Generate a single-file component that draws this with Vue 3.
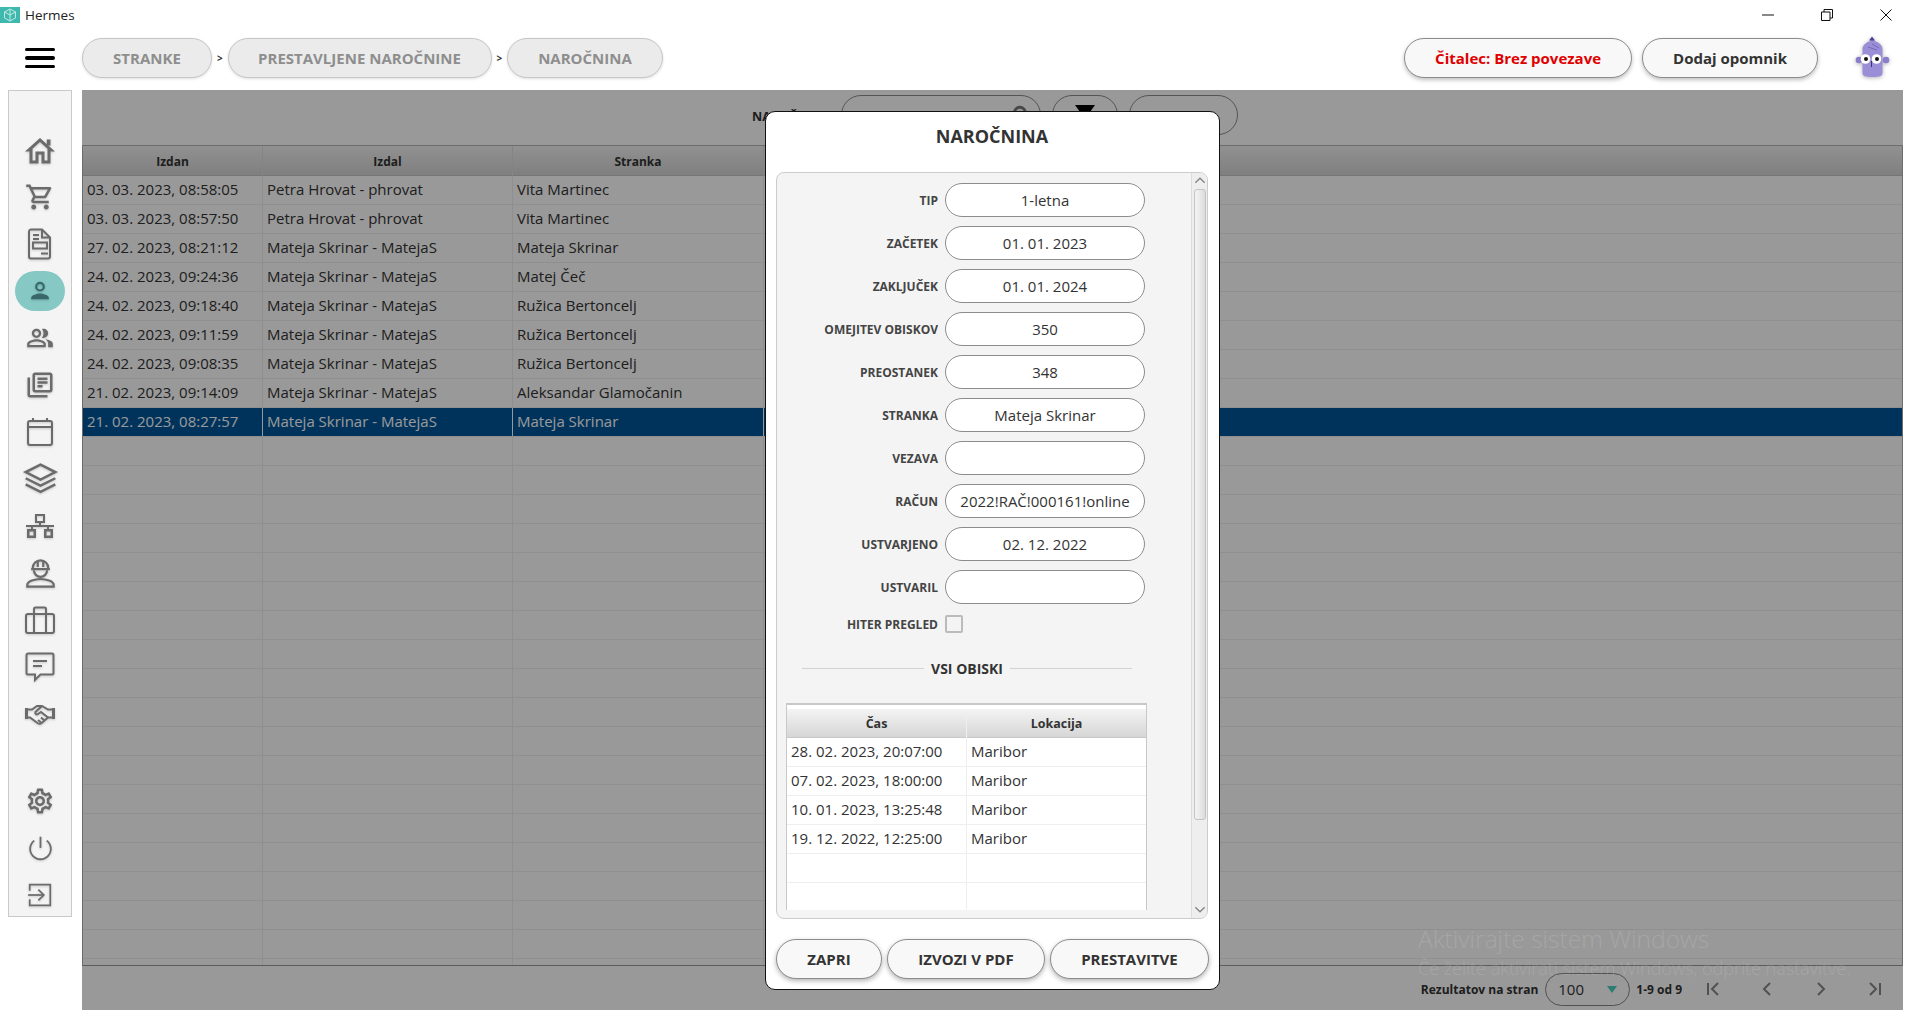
<script setup>
const crumbs = [
  { label: 'STRANKE', width: 130 },
  { label: 'PRESTAVLJENE NAROČNINE', width: 264 },
  { label: 'NAROČNINA', width: 156 }
]

const navTop = [
  { size: 36, vb: '0 -1 24 24', fill: ['M12 5.69l5 4.5V18h-2v-6H9v6H7v-7.81l5-4.5M12 3L2 12h3v8h6v-6h2v6h6v-8h3L12 3z', 'M16.500 4h2.500v4h-2.500z'] },
  { vb: '0 0 24 24', fill: ['M15.55 13c.75 0 1.41-.41 1.75-1.03l3.58-6.49c.37-.66-.11-1.48-.87-1.48H5.21l-.94-2H1v2h2l3.6 7.59-1.35 2.44C4.52 15.37 5.48 17 7 17h12v-2H7l1.1-2h7.45zM6.16 6h12.15l-2.76 5H8.53L6.16 6zM7 18c-1.1 0-1.99.9-1.99 2S5.9 22 7 22s2-.9 2-2-.9-2-2-2zm10 0c-1.1 0-1.99.9-1.99 2s.89 2 1.99 2 2-.9 2-2-.9-2-2-2z'] },
  { size: 34, vb: '0 0 28 34', line: ['M5 2.500h11l8 8v19a2 2 0 0 1-2 2H5a2 2 0 0 1-2-2v-25a2 2 0 0 1 2-2z', 'M16 2.500v8h8', 'M7 8h6M7 12h6', 'M7 15.500h14v6H7z', 'M15 26.500h7'] },
  { size: 26, vb: '0 0 24 24', active: true, line: ['M12 4.500a3.500 3.500 0 1 1 0 7a3.500 3.500 0 0 1 0-7z'], fill: ['M3.800 19.500v-.8c0-2.900 5.400-4.300 8.200-4.300s8.200 1.400 8.200 4.300v.8z'] },
  { size: 28, vb: '0 0 24 24', fill: ['M16.67 13.13C18.04 14.06 19 15.32 19 17v3h4v-3c0-2.180-3.570-3.470-6.330-3.870z', 'M15 12c2.210 0 4-1.790 4-4s-1.790-4-4-4c-.47 0-.91.1-1.330.24C14.500 5.270 15 6.580 15 8s-.5 2.730-1.330 3.760c.42.14.86.24 1.330.24z', 'M9 12c2.210 0 4-1.790 4-4s-1.790-4-4-4-4 1.790-4 4 1.790 4 4 4zm0-6c1.100 0 2 .9 2 2s-.9 2-2 2-2-.9-2-2 .9-2 2-2z', 'M9 13c-2.670 0-8 1.340-8 4v3h16v-3c0-2.660-5.330-4-8-4zm6 5H3v-.99C3.200 16.290 6.300 15 9 15s5.800 1.290 6 2v1z'] },
  { vb: '0 0 24 24', fill: ['M4 6H2v14c0 1.100.9 2 2 2h14v-2H4V6zm16-4H8c-1.100 0-2 .9-2 2v12c0 1.100.9 2 2 2h12c1.100 0 2-.9 2-2V4c0-1.100-.9-2-2-2zm0 14H8V4h12v12zM10 9h8v2h-8zm0 3h4v2h-4zm0-6h8v2h-8z'] },
  { vb: '0 0 28 30', line: ['M4 4h20a2 2 0 0 1 2 2v20a2 2 0 0 1-2 2H4a2 2 0 0 1-2-2V6a2 2 0 0 1 2-2z', 'M2 10h24', 'M7 1v4M21 1v4'] },
  { size: 37, vb: '0 0 30 30', line: ['M15 3l12 6-12 6-12-6z', 'M3 14l12 6 12-6', 'M3 19l12 6 12-6'] },
  { vb: '0 0 30 26', line: ['M11 2h8v7h-8z', 'M15 9v4M1 13h28M7 13v4M23 13v4'], fill: ['M2 16h9v9H2zM4.500 18.500v4h4v-4zM19 16h9v9h-9zM21.500 18.500v4h4v-4z'] },
  { size: 33, vb: '0 1 28 30', line: ['M7 11a7 7 0 0 1 14 0', 'M5.500 12h17', 'M11.500 4.500V10M16.500 4.500V10', 'M8 13a6 6 0 0 0 12 0', 'M2 28v-1.500c0-3.500 7-5.500 12-5.500s12 2 12 5.500V28z'] },
  { vb: '0 0 30 28', line: ['M3 8h24a2 2 0 0 1 2 2v15a2 2 0 0 1-2 2H3a2 2 0 0 1-2-2V10a2 2 0 0 1 2-2z', 'M9 8V3a1.500 1.500 0 0 1 1.500-1.500h9A1.500 1.500 0 0 1 21 3v5', 'M9 8v19M21 8v19'] },
  { vb: '0 0 30 30', line: ['M3 1.500h24A1.500 1.500 0 0 1 28.500 3v18a1.500 1.500 0 0 1-1.500 1.500H15.500L10 28v-5.500H3A1.500 1.500 0 0 1 1.500 21V3A1.500 1.500 0 0 1 3 1.500z', 'M8 9h14M8 14h9'] },
  { vb: '0 0 30 22', fill: ['M0 5h3v11H0zM27 5h3v11h-3z'], line: ['M3 6.500h4L12 3h5l6 3.500h4', 'M3 14.500h2l7.500 5.500c1.500 1 3 1 4.500-.2l6-5.300h4', 'M17 3l-6.500 6c-1 1.500 1 3 2.500 2l3-2 7 5.500', 'M13 17l3 2.500M16 14.500l3.500 3'] }
]

const navBottom = [
  { vb: '0 0 24 24', fill: ['M19.43 12.98c.04-.32.07-.64.07-.98 0-.34-.03-.66-.07-.98l2.110-1.650c.19-.15.24-.42.12-.64l-2-3.460c-.09-.16-.26-.25-.44-.25-.06 0-.12.01-.17.03l-2.490 1c-.52-.4-1.080-.73-1.690-.98l-.38-2.650C14.460 2.180 14.250 2 14 2h-4c-.25 0-.46.18-.49.42l-.38 2.650c-.61.25-1.170.59-1.690.98l-2.490-1c-.06-.02-.12-.03-.18-.03-.17 0-.34.09-.43.25l-2 3.460c-.13.22-.07.49.12.64l2.110 1.650c-.04.32-.07.65-.07.98 0 .33.03.66.07.98l-2.110 1.650c-.19.15-.24.42-.12.64l2 3.460c.09.16.26.25.44.25.06 0 .12-.01.17-.03l2.490-1c.52.4 1.080.73 1.690.98l.38 2.650c.03.24.24.42.49.42h4c.25 0 .46-.18.49-.42l.38-2.650c.61-.25 1.170-.59 1.690-.98l2.490 1c.06.02.12.03.18.03.17 0 .34-.09.43-.25l2-3.460c.12-.22.07-.49-.12-.64l-2.110-1.650zm-1.980-1.710c.04.31.05.52.05.73 0 .21-.02.43-.05.73l-.14 1.130.89.7 1.080.84-.7 1.210-1.270-.51-1.040-.42-.9.68c-.43.32-.84.56-1.250.73l-1.060.43-.16 1.130-.2 1.350h-1.400l-.19-1.350-.16-1.130-1.060-.43c-.43-.18-.83-.41-1.230-.71l-.91-.7-1.060.43-1.270.51-.7-1.210 1.080-.84.89-.7-.14-1.130c-.03-.31-.05-.54-.05-.74s.02-.43.05-.73l.14-1.130-.89-.7-1.080-.84.7-1.210 1.270.51 1.040.42.9-.68c.43-.32.84-.56 1.250-.73l1.060-.43.16-1.130.2-1.350h1.390l.19 1.350.16 1.130 1.060.43c.43.18.83.41 1.230.71l.91.7 1.060-.43 1.270-.51.7 1.210-1.070.85-.89.7.14 1.130zM12 8c-2.210 0-4 1.790-4 4s1.790 4 4 4 4-1.790 4-4-1.790-4-4-4zm0 6c-1.100 0-2-.9-2-2s.9-2 2-2 2 .9 2 2-.9 2-2 2z'] },
  { size: 27, thin: true, vb: '0 1 24 24', line: ['M12 2.500v10', 'M6.500 6a9.200 9.200 0 1 0 11 0'] },
  { size: 26, thin: true, vb: '0 0 24 24', line: ['M2.500 8V2.500h19v19h-19V16', 'M1 12h14', 'M10.500 7l5 5-5 5'] }
]

const rows = [
  ['03. 03. 2023, 08:58:05', 'Petra Hrovat - phrovat', 'Vita Martinec'],
  ['03. 03. 2023, 08:57:50', 'Petra Hrovat - phrovat', 'Vita Martinec'],
  ['27. 02. 2023, 08:21:12', 'Mateja Skrinar - MatejaS', 'Mateja Skrinar'],
  ['24. 02. 2023, 09:24:36', 'Mateja Skrinar - MatejaS', 'Matej Čeč'],
  ['24. 02. 2023, 09:18:40', 'Mateja Skrinar - MatejaS', 'Ružica Bertoncelj'],
  ['24. 02. 2023, 09:11:59', 'Mateja Skrinar - MatejaS', 'Ružica Bertoncelj'],
  ['24. 02. 2023, 09:08:35', 'Mateja Skrinar - MatejaS', 'Ružica Bertoncelj'],
  ['21. 02. 2023, 09:14:09', 'Mateja Skrinar - MatejaS', 'Aleksandar Glamočanin'],
  ['21. 02. 2023, 08:27:57', 'Mateja Skrinar - MatejaS', 'Mateja Skrinar']
]
const selectedRow = 8
const emptyRows = 20

const fields = [
  ['TIP', '1-letna'],
  ['ZAČETEK', '01. 01. 2023'],
  ['ZAKLJUČEK', '01. 01. 2024'],
  ['OMEJITEV OBISKOV', '350'],
  ['PREOSTANEK', '348'],
  ['STRANKA', 'Mateja Skrinar'],
  ['VEZAVA', ''],
  ['RAČUN', '2022!RAČ!000161!online'],
  ['USTVARJENO', '02. 12. 2022'],
  ['USTVARIL', '']
]

const visits = [
  ['28. 02. 2023, 20:07:00', 'Maribor'],
  ['07. 02. 2023, 18:00:00', 'Maribor'],
  ['10. 01. 2023, 13:25:48', 'Maribor'],
  ['19. 12. 2022, 12:25:00', 'Maribor'],
  ['', ''],
  ['', '']
]
</script>

<template>
  <div class="app">
    <header class="titlebar">
      <svg class="logo" viewBox="0 0 20 16">
        <rect width="20" height="16" fill="#3fb8ae" />
        <path d="M10 2l5.500 3v6L10 14l-5.500-3V5zM10 2v12M4.500 5L10 8l5.500-3" fill="none" stroke="#cfeeea" stroke-width=".9" />
      </svg>
      <span class="app-name">Hermes</span>
      <div class="win-buttons">
        <svg viewBox="0 0 12 12"><path d="M0 6h12" /></svg>
        <svg viewBox="0 0 12 12"><path d="M.5 3h8.500v8.500H.5zM3 3V.5h8.500V9H9" /></svg>
        <svg viewBox="0 0 12 12"><path d="M.5.5l11 11M11.500.5l-11 11" /></svg>
      </div>
    </header>

    <div class="topbar">
      <button class="hamburger"><i></i><i></i><i></i></button>
      <template v-for="(crumb, i) in crumbs" :key="crumb.label">
        <span v-if="i" class="crumb-sep">&gt;</span>
        <span class="crumb" :style="{ width: crumb.width + 'px' }">{{ crumb.label }}</span>
      </template>
      <span class="pill reader">Čitalec: Brez povezave</span>
      <span class="pill">Dodaj opomnik</span>
      <svg class="mascot" viewBox="0 0 50 50">
        <circle cx="11" cy="27" r="3.300" fill="#8b7dc9" />
        <circle cx="38" cy="27" r="3.300" fill="#8b7dc9" />
        <path d="M24 5c1 0 2 1 2.500 3c4 1 8 4 8 8v24c0 3-3 4-10 4s-10-1-10-4V16c0-4 4-7 8-8c.5-2 .5-3 1.500-3z" fill="#9a8ed6" />
        <path d="M24 3.500l3 4h-6z" fill="#4d3f96" />
        <path d="M20 14l9 3M24 11l7 4" stroke="#7668b8" fill="none" />
        <circle cx="17.500" cy="26" r="4.800" fill="#fff" />
        <circle cx="28.500" cy="26" r="4.800" fill="#fff" />
        <circle cx="18" cy="26" r="2" fill="#111" />
        <circle cx="29" cy="26" r="2" fill="#111" />
        <path d="M23.500 28v6" stroke="#3c3470" stroke-width="1" />
      </svg>
    </div>

    <div class="main">
      <nav class="sidebar">
        <div class="nav-group">
          <span v-for="(item, i) in navTop" :key="i" class="nav-item" :class="{ active: item.active }">
            <svg :viewBox="item.vb" :width="item.size || 30" :height="item.size || 30">
              <path v-for="d in item.fill" :key="d" :d="d" class="ico-fill" />
              <path v-for="d in item.line" :key="d" :d="d" class="ico-line" />
            </svg>
          </span>
        </div>
        <div class="nav-group">
          <span v-for="(item, i) in navBottom" :key="i" class="nav-item" :class="{ thin: item.thin }">
            <svg :viewBox="item.vb" :width="item.size || 30" :height="item.size || 30">
              <path v-for="d in item.fill" :key="d" :d="d" class="ico-fill" />
              <path v-for="d in item.line" :key="d" :d="d" class="ico-line" />
            </svg>
          </span>
        </div>
      </nav>

      <section class="content">
        <div class="toolbar">
          <span class="filter-label">NAROČNINA</span>
          <span class="tool search">
            <svg viewBox="0 0 16 16"><circle cx="7" cy="7" r="5" /></svg>
          </span>
          <span class="tool funnel"><i></i></span>
          <span class="tool wide"></span>
        </div>

        <div class="table">
          <div class="t-row t-head">
            <div>Izdan</div><div>Izdal</div><div>Stranka</div><div></div>
          </div>
          <div v-for="(row, i) in rows" :key="i" class="t-row" :class="{ selected: i === selectedRow }">
            <div v-for="cell in row" :key="cell">{{ cell }}</div>
            <div></div>
          </div>
          <div v-for="n in emptyRows" :key="'e' + n" class="t-row">
            <div></div><div></div><div></div><div></div>
          </div>
        </div>

        <footer class="pager">
          <span class="pager-label">Rezultatov na stran</span>
          <span class="page-size">100<i></i></span>
          <span class="pager-label range">1-9 od 9</span>
          <svg class="pager-ico" viewBox="0 0 16 16"><path d="M3 2v12M13 2L7 8l6 6" /></svg>
          <svg class="pager-ico" viewBox="0 0 16 16"><path d="M11 2L5 8l6 6" /></svg>
          <svg class="pager-ico" viewBox="0 0 16 16"><path d="M5 2l6 6-6 6" /></svg>
          <svg class="pager-ico" viewBox="0 0 16 16"><path d="M13 2v12M3 2l6 6-6 6" /></svg>
        </footer>

        <div class="overlay">
          <div class="modal">
            <h2 class="modal-title">NAROČNINA</h2>
            <div class="panel">
              <div class="panel-body">
                <div v-for="f in fields" :key="f[0]" class="field">
                  <label>{{ f[0] }}</label>
                  <span class="field-value">{{ f[1] }}</span>
                </div>
                <div class="field check-row">
                  <label>HITER PREGLED</label>
                  <span class="check"></span>
                </div>
                <div class="divider"><span>VSI OBISKI</span></div>
                <div class="visits">
                  <div class="v-row v-head"><div>Čas</div><div>Lokacija</div></div>
                  <div v-for="(v, i) in visits" :key="i" class="v-row">
                    <div>{{ v[0] }}</div><div>{{ v[1] }}</div>
                  </div>
                </div>
              </div>
              <div class="scrollbar">
                <svg viewBox="0 0 10 6"><path d="M1 5l4-4 4 4" /></svg>
                <div class="thumb"></div>
                <svg viewBox="0 0 10 6"><path d="M1 1l4 4 4-4" /></svg>
              </div>
            </div>
            <div class="modal-actions">
              <button>ZAPRI</button>
              <button>IZVOZI V PDF</button>
              <button>PRESTAVITVE</button>
            </div>
          </div>
        </div>
      </section>
    </div>

    <div class="watermark">
      <div class="wm-big">Aktivirajte sistem Windows</div>
      <div class="wm-small">Če želite aktivirati sistem Windows, odprite nastavitve.</div>
    </div>
  </div>
</template>

<style>
html, body { margin: 0; background: #fff; overflow: hidden; }
</style>

<style scoped>
.app {
  position: relative;
  width: 1917px;
  height: 1024px;
  background: #fff;
  font-family: "Open Sans", "Liberation Sans", sans-serif;
  color: #333;
  overflow: hidden;
}

.titlebar {
  display: flex;
  align-items: center;
  height: 30px;
}
.logo { width: 20px; height: 16px; }
.app-name { margin-left: 5px; font-size: 13.500px; color: #222; }
.win-buttons {
  margin-left: auto;
  display: flex;
  gap: 47px;
  padding-right: 25px;
}
.win-buttons svg { width: 12px; height: 12px; }
.win-buttons path { fill: none; stroke: #111; stroke-width: 1; }

.topbar {
  display: flex;
  align-items: center;
  height: 60px;
  padding: 0 26px 4px 0;
  box-sizing: border-box;
}
.hamburger {
  display: flex;
  flex-direction: column;
  gap: 5px;
  width: 30px;
  margin: 0 27px 0 25px;
  padding: 0;
  border: 0;
  background: none;
}
.hamburger i { height: 3.500px; border-radius: 2px; background: #000; }
.crumb {
  display: flex;
  align-items: center;
  justify-content: center;
  height: 40px;
  box-sizing: border-box;
  border: 1px solid #c6c6c6;
  border-radius: 20px;
  background: #ebebeb;
  color: #8e8e8e;
  font-size: 15px;
  font-weight: 700;
  box-shadow: 0 1px 3px rgba(0, 0, 0, .12);
}
.crumb-sep {
  width: 15.500px;
  text-align: center;
  font-size: 10px;
  font-weight: 700;
  color: #333;
}
.pill {
  display: flex;
  align-items: center;
  height: 40px;
  padding: 0 30px;
  margin-right: 10px;
  box-sizing: border-box;
  border: 1px solid #8c8c8c;
  border-radius: 20px;
  background: #f8f8f8;
  color: #333;
  font-size: 15px;
  font-weight: 700;
  box-shadow: 0 2px 4px rgba(0, 0, 0, .25);
}
.reader { margin-left: auto; color: #e00000; }
.mascot {
  width: 50px;
  height: 50px;
  margin-left: 20px;
  margin-right: -7px;
  filter: drop-shadow(0 1px 2px rgba(0, 0, 0, .3));
}

.main {
  display: flex;
  align-items: flex-start;
  padding-left: 8px;
}
.sidebar {
  display: flex;
  flex-direction: column;
  justify-content: space-between;
  width: 64px;
  height: 827px;
  box-sizing: border-box;
  padding: 39px 0 1px;
  background: #f4f4f4;
  border: 1px solid #c9c9c9;
}
.nav-group {
  display: flex;
  flex-direction: column;
  align-items: center;
  gap: 7px;
}
.nav-item {
  display: flex;
  align-items: center;
  justify-content: center;
  width: 50px;
  height: 40px;
  border-radius: 20px;
}
.nav-item svg {
  filter: drop-shadow(0 1px 1px rgba(0, 0, 0, .18));
}
.nav-item.active { background: #85c8c4; }
.ico-fill { fill: #6b6b6b; }
.ico-line { fill: none; stroke: #6b6b6b; stroke-width: 2; }
.thin .ico-line { stroke-width: 1.600; }
.active .ico-fill { fill: #39686a; }
.active .ico-line { stroke: #39686a; }

.content {
  position: relative;
  display: flex;
  flex-direction: column;
  width: 1821px;
  height: 920px;
  margin-left: 10px;
}
.toolbar {
  display: flex;
  gap: 11px;
  height: 55px;
  padding: 5px 0 0 670px;
  box-sizing: border-box;
}
.filter-label {
  width: 78px;
  line-height: 43px;
  font-size: 12.500px;
  font-weight: 700;
  white-space: nowrap;
}
.tool {
  display: flex;
  height: 40px;
  box-sizing: border-box;
  border: 1px solid #8c8c8c;
  border-radius: 20px;
  background: #fff;
}
.search { width: 200px; justify-content: flex-end; padding: 9px 10px 0 0; }
.search svg { width: 18px; height: 18px; }
.search circle { fill: none; stroke: #777; stroke-width: 2.500; }
.funnel { width: 66px; justify-content: center; padding-top: 9px; }
.funnel i {
  width: 0;
  height: 0;
  border: 10px solid transparent;
  border-top: 14px solid #000;
  border-bottom: 0;
}
.wide { width: 109px; }

.table {
  flex: 1;
  min-height: 0;
  overflow: hidden;
  border-top: 1px solid #b5b5b5;
  border-left: 1px solid #b5b5b5;
  border-right: 1px solid #b5b5b5;
  border-bottom: 1px solid #9a9a9a;
  box-sizing: border-box;
}
.t-row {
  display: grid;
  grid-template-columns: 180px 250px 251px 1fr;
  height: 29px;
  box-sizing: border-box;
  border-bottom: 1px solid #eee;
  font-size: 15px;
  line-height: 27px;
}
.t-row > div {
  padding-left: 4px;
  border-right: 1px solid #eee;
  white-space: nowrap;
}
.t-head {
  height: 30px;
  background: linear-gradient(#f2f2f2, #d4d4d4);
  border-bottom: 1px solid #c4c4c4;
  font-size: 12px;
  font-weight: 700;
  line-height: 31px;
  text-align: center;
}
.t-head > div { padding-left: 0; border-right-color: #ddd; }
.t-row > div:last-child { border-right: 0; }
.selected { background: #00559a; color: #fff; }
.selected > div { border-right-color: #fff; }

.pager {
  display: flex;
  align-items: center;
  justify-content: flex-end;
  height: 44px;
  padding: 2px 1px 0 0;
  box-sizing: border-box;
}
.pager-label { font-size: 12px; font-weight: 700; color: #333; }
.page-size {
  display: flex;
  align-items: center;
  width: 85px;
  height: 33px;
  margin: 0 6px 0 7px;
  padding: 0 12px 0 12px;
  box-sizing: border-box;
  border: 1px solid #888;
  border-radius: 17px;
  font-size: 15px;
}
.page-size i {
  margin-left: auto;
  width: 0;
  height: 0;
  border: 5px solid transparent;
  border-top: 7px solid #45d0c0;
  border-bottom: 0;
}
.range { margin-right: 8px; }
.pager-ico { width: 16px; height: 16px; margin: 0 19px; }
.pager-ico path { fill: none; stroke: #888; stroke-width: 2; }
.range + .pager-ico { margin-left: 15px; }

.overlay {
  position: absolute;
  inset: 0;
  display: flex;
  align-items: center;
  justify-content: center;
  background: rgba(0, 0, 0, .4);
}
.modal {
  display: flex;
  flex-direction: column;
  width: 455px;
  height: 879px;
  box-sizing: border-box;
  padding: 0 11px 10px 10px;
  background: #fff;
  border: 1px solid #111;
  border-radius: 10px;
}
.modal-title {
  margin: 0;
  height: 60px;
  flex: none;
  font-size: 18px;
  font-weight: 700;
  line-height: 48px;
  text-align: center;
  color: #333;
}
.panel {
  display: flex;
  flex: 1;
  min-height: 0;
  border: 1px solid #ccc;
  border-radius: 8px;
  background: #f4f4f4;
  overflow: hidden;
}
.panel-body {
  flex: 1;
  min-width: 0;
  padding-top: 10px;
}
.field {
  display: flex;
  align-items: center;
  gap: 7px;
  height: 34px;
  margin-bottom: 9px;
}
.field label {
  width: 161px;
  flex: none;
  padding-top: 1px;
  text-align: right;
  font-size: 12px;
  font-weight: 700;
  color: #444;
}
.field-value {
  width: 200px;
  height: 34px;
  box-sizing: border-box;
  border: 1px solid #8c8c8c;
  border-radius: 17px;
  background: #fff;
  font-size: 15px;
  line-height: 32px;
  text-align: center;
  color: #333;
  white-space: nowrap;
}
.check-row { height: 18px; margin: 11px 0 0; }
.check {
  width: 18px;
  height: 18px;
  box-sizing: border-box;
  border: 2px solid #bbb;
  border-radius: 2px;
  background: #f4f4f4;
}
.divider {
  display: flex;
  align-items: center;
  gap: 7px;
  width: 330px;
  margin: 26px 0 24px 25px;
  height: 20px;
  font-size: 14px;
  font-weight: 700;
  color: #333;
}
.divider::before,
.divider::after {
  content: "";
  flex: 1;
  height: 1px;
  background: #d2d2d2;
}
.visits {
  width: 361px;
  height: 207px;
  margin-left: 9px;
  box-sizing: border-box;
  overflow: hidden;
  background: #fff;
  border: 1px solid #c8c8c8;
  border-top-width: 2px;
  border-bottom: 0;
  padding-top: 4px;
}
.v-row {
  display: grid;
  grid-template-columns: 180px 1fr;
  height: 29px;
  box-sizing: border-box;
  border-bottom: 1px solid #eee;
  font-size: 15px;
  line-height: 27px;
}
.v-row > div { padding-left: 4px; white-space: nowrap; }
.v-row > div:first-child { border-right: 1px solid #eee; }
.v-head {
  background: linear-gradient(#f4f4f4, #d6d6d6);
  border-bottom: 1px solid #c8c8c8;
  font-size: 12.500px;
  font-weight: 700;
  text-align: center;
  line-height: 29px;
}
.v-head > div { padding-left: 0; }
.scrollbar {
  display: flex;
  flex-direction: column;
  align-items: center;
  flex: none;
  width: 16px;
  background: #eee;
  border-left: 1px solid #ddd;
  box-sizing: border-box;
}
.scrollbar svg { flex: none; width: 12px; height: 7px; margin: 4px 0 5px; }
.scrollbar path { fill: none; stroke: #888; stroke-width: 1.200; }
.thumb {
  flex: 1;
  width: 12px;
  margin: 0 0 86px;
  box-sizing: border-box;
  border: 1px solid #c4c4c4;
  border-radius: 3px;
  background: linear-gradient(90deg, #f4f4f4, #dcdcdc);
}
.scrollbar svg:last-child { margin-top: auto; }
.modal-actions {
  display: grid;
  grid-template-columns: 106px 158px 159px;
  gap: 5px;
  margin-top: 20px;
}
.modal-actions button {
  height: 40px;
  padding: 0;
  border: 1px solid #8c8c8c;
  border-radius: 20px;
  background: #f8f8f8;
  color: #333;
  font-family: inherit;
  font-size: 15px;
  font-weight: 700;
  box-shadow: 0 2px 5px rgba(0, 0, 0, .3);
}

.watermark {
  position: absolute;
  left: 1418px;
  top: 923px;
  color: rgba(255, 255, 255, .14);
  font-weight: 300;
  pointer-events: none;
  white-space: nowrap;
}
.wm-big { font-size: 24.500px; line-height: 32px; }
.wm-small { font-size: 18px; line-height: 26px; }
</style>
